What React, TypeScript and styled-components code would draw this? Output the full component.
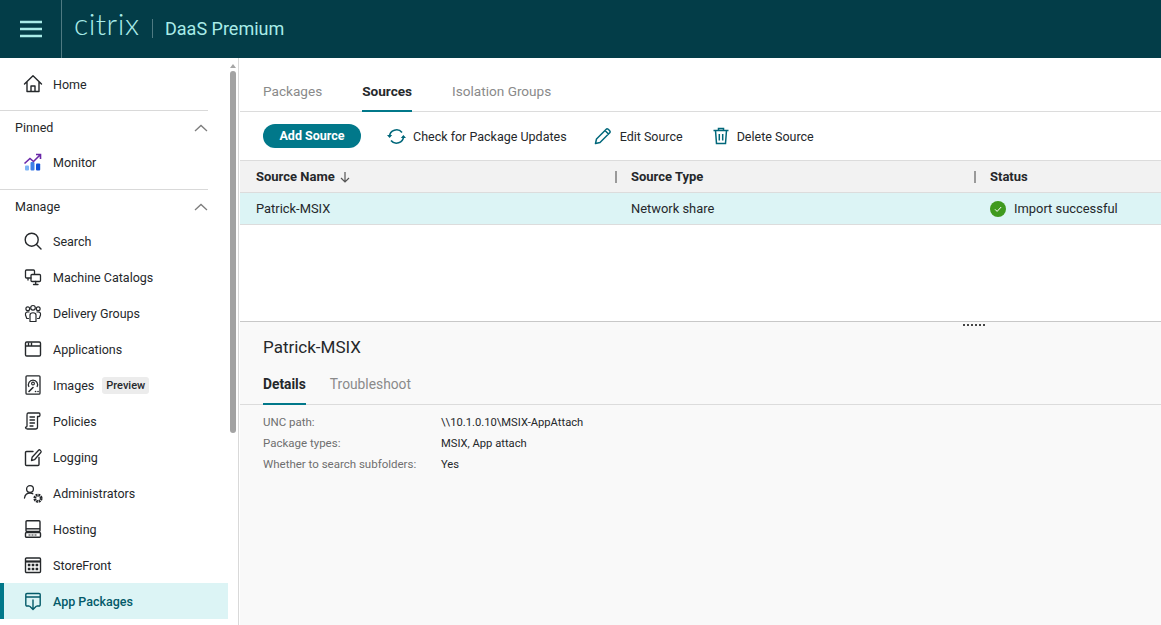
import React from "react";
import styled, { createGlobalStyle } from "styled-components";

const GlobalStyle = createGlobalStyle`
  html, body {
    margin: 0;
    padding: 0;
    height: 100%;
    overflow: hidden;
    background: #fff;
    font-family: Roboto, "Liberation Sans", sans-serif;
    color: #25282b;
  }
`;

const Page = styled.div`
  width: 1161px;
  height: 625px;
  display: flex;
  flex-direction: column;
  overflow: hidden;
`;

const TopBar = styled.header`
  height: 58px;
  flex: none;
  display: flex;
  align-items: center;
  background: #033d48;
  color: #a9ece8;
`;

const MenuButton = styled.div`
  width: 62px;
  height: 58px;
  box-sizing: border-box;
  display: flex;
  align-items: center;
  justify-content: center;
  border-right: 1px solid #4f7a82;
`;

const Logo = styled.span`
  margin: 0 0 13px 12px;
  width: 78px;
  font-family: Lato, sans-serif;
  font-weight: 300;
  font-size: 30px;
  line-height: 44px;
  letter-spacing: 0.5px;
`;

const ProductName = styled.span`
  margin-bottom: 2px;
  padding-left: 12px;
  border-left: 1px solid #4f7a82;
  font-size: 18px;
  line-height: 19px;
`;

const Body = styled.div`
  flex: 1;
  min-height: 0;
  display: flex;
`;

const Sidebar = styled.aside`
  width: 239px;
  box-sizing: border-box;
  flex: none;
  display: flex;
  border-right: 1px solid #d9d9d9;
`;

const NavColumn = styled.nav`
  width: 228px;
  flex: none;
  padding-top: 8px;
`;

const NavSection = styled.div`
  margin-top: 8px;
  &:first-child {
    margin-top: 0;
  }
  &:last-child {
    margin-top: 9px;
  }
`;

const SectionHead = styled.div`
  height: 34px;
  margin-right: 20px;
  box-sizing: border-box;
  padding: 0 0 0 15px;
  display: flex;
  align-items: center;
  justify-content: space-between;
  border-top: 1px solid #d9d9d9;
  font-size: 12.5px;
`;

const NavItem = styled.div<{ $active?: boolean }>`
  height: 36px;
  box-sizing: border-box;
  display: flex;
  align-items: center;
  gap: 10px;
  padding-left: ${(p) => (p.$active ? "19px" : "23px")};
  font-size: 12.5px;
  border-left: ${(p) => (p.$active ? "4px solid #01788a" : "none")};
  background: ${(p) => (p.$active ? "#dcf4f5" : "transparent")};
  color: ${(p) => (p.$active ? "#035a69" : "#25282b")};
  font-weight: ${(p) => (p.$active ? 500 : 400)};
`;

const NavIcon = styled.span`
  width: 20px;
  height: 20px;
  display: flex;
  align-items: center;
  justify-content: center;
  flex: none;
`;

const Badge = styled.span`
  margin-left: -2px;
  padding: 2px 4px;
  background: #ececec;
  border-radius: 3px;
  font-size: 11px;
  font-weight: 500;
  line-height: 13px;
`;

const ScrollTrack = styled.div`
  width: 6px;
  margin-left: 2px;
  padding-top: 6px;
  display: flex;
  flex-direction: column;
  align-items: center;
  gap: 3px;
`;

const ScrollArrow = styled.div`
  width: 0;
  height: 0;
  border-left: 3px solid transparent;
  border-right: 3px solid transparent;
  border-bottom: 4px solid #a6a6a6;
`;

const ScrollThumb = styled.div`
  width: 6px;
  height: 362px;
  border-radius: 3px;
  background: #a3a3a3;
`;

const Main = styled.main`
  flex: 1;
  min-width: 0;
  padding-left: 1px;
  display: flex;
  flex-direction: column;
`;

const TabBar = styled.div<{ $gap: number; $size: number; $height: number }>`
  height: ${(p) => p.$height}px;
  flex: none;
  box-sizing: border-box;
  padding-left: 23px;
  display: flex;
  gap: ${(p) => p.$gap}px;
  border-bottom: 1px solid #dcdcdc;
  font-size: ${(p) => p.$size}px;
`;

const Tab = styled.div<{ $active?: boolean }>`
  display: flex;
  align-items: flex-end;
  padding-bottom: 11px;
  margin-bottom: -1px;
  border-bottom: 2px solid ${(p) => (p.$active ? "#01788a" : "transparent")};
  color: ${(p) => (p.$active ? "#25282b" : "#8a8a8a")};
  font-weight: ${(p) => (p.$active ? 700 : 400)};
`;

const Toolbar = styled.div`
  height: 48px;
  flex: none;
  box-sizing: border-box;
  padding-left: 23px;
  display: flex;
  align-items: center;
  font-size: 12.5px;
`;

const PrimaryButton = styled.button`
  width: 98px;
  height: 24px;
  padding: 0 0 2px;
  border: none;
  border-radius: 12px;
  background: #01788a;
  color: #fff;
  font: 700 12.5px Roboto, sans-serif;
`;

const ToolAction = styled.div<{ $left: number; $gap: number }>`
  display: flex;
  align-items: center;
  gap: ${(p) => p.$gap}px;
  margin-left: ${(p) => p.$left}px;
`;

const TablePane = styled.div`
  height: 161px;
  flex: none;
`;

const HeadRow = styled.div`
  height: 33px;
  box-sizing: border-box;
  display: grid;
  grid-template-columns: 375px 359px 1fr;
  background: #f2f2f2;
  border-top: 1px solid #dcdcdc;
  border-bottom: 1px solid #dcdcdc;
  font-size: 13px;
  font-weight: 700;
`;

const HeadCell = styled.div`
  padding: 0 0 0 16px;
  display: flex;
  align-items: center;
  gap: 4px;
`;

const Divider = styled.span`
  width: 2px;
  height: 12px;
  margin: 0 -2px 0 auto;
  background: #9a9a9a;
`;

const DataRow = styled.div`
  height: 32px;
  box-sizing: border-box;
  display: grid;
  grid-template-columns: 375px 359px 1fr;
  background: #dcf4f5;
  border-bottom: 1px solid #dcdcdc;
  font-size: 12.9px;
`;

const DataCell = styled.div`
  padding-left: 16px;
  display: flex;
  align-items: center;
  gap: 8px;
`;

const DetailPane = styled.section`
  flex: 1;
  position: relative;
  background: #f9f9f9;
  border-top: 1px solid #c8c8c8;
`;

const Handle = styled.div`
  position: absolute;
  left: 723px;
  top: 2px;
  width: 23px;
  height: 2px;
  background: repeating-linear-gradient(90deg, #444 0 2px, transparent 2px 4px);
`;

const DetailTitle = styled.h2`
  margin: 0;
  padding: 14px 0 0 23px;
  height: 24px;
  font-size: 17px;
  line-height: 22px;
  font-weight: 400;
`;

const InfoList = styled.div`
  padding: 10px 0 0 23px;
  display: grid;
  grid-template-columns: 178px 1fr;
  grid-auto-rows: 21px;
  align-items: baseline;
  font-size: 11.2px;
`;

const InfoLabel = styled.span`
  color: #6f6f6f;
  font-size: 11.5px;
`;

const Line = ({ d, w = 1.5 }: { d: string; w?: number }) => (
  <path d={d} fill="none" stroke="currentColor" strokeWidth={w} strokeLinecap="round" strokeLinejoin="round" />
);

const Glyph = ({ size = 20, children }: { size?: number; children: React.ReactNode }) => (
  <svg width={size} height={size} viewBox="0 0 20 20">
    {children}
  </svg>
);

const Chevron = () => (
  <svg width="14" height="8" viewBox="0 0 14 8">
    <path d="M1 7l6-5.5L13 7" fill="none" stroke="#7d7d7d" strokeWidth="1.3" />
  </svg>
);

const icons: Record<string, React.ReactNode> = {
  home: (
    <Glyph size={22}>
      <Line d="M1.5 10L10 1.8 18.5 10M4 8v9.5h12V8M8 17.5v-5.5h4v5.5" w={1.4} />
    </Glyph>
  ),
  monitor: (
    <Glyph>
      <rect x="2" y="13.5" width="4" height="5" rx="1" fill="#7db4f5" />
      <rect x="7.5" y="10" width="4" height="8.5" rx="1" fill="#3f7fe8" />
      <rect x="13" y="11.5" width="4.2" height="7" rx="1" fill="#0f4fd6" />
      <path d="M1.5 11.5L7 6.5l3.5 3L17 3M13 2.5H17.5V7" fill="none" stroke="#6a27a8" strokeWidth="1.6" />
    </Glyph>
  ),
  search: (
    <Glyph>
      <circle cx="8.7" cy="8.7" r="6.5" fill="none" stroke="currentColor" strokeWidth="1.4" />
      <Line d="M13.5 13.5l4.5 4.5" w={1.4} />
    </Glyph>
  ),
  catalogs: (
    <Glyph>
      <Line d="M8 11H3.5a1 1 0 0 1-1-1V4a1 1 0 0 1 1-1h7a1 1 0 0 1 1 1v3M5 11v2" w={1.3} />
      <rect x="8" y="7.5" width="9.5" height="7" rx="1" fill="none" stroke="currentColor" strokeWidth="1.3" />
      <Line d="M10.5 17.5h4.5M12.7 14.5v3" w={1.3} />
    </Glyph>
  ),
  groups: (
    <Glyph>
      <circle cx="10" cy="4.8" r="2.3" fill="none" stroke="currentColor" strokeWidth="1.2" />
      <circle cx="4.8" cy="5.8" r="1.9" fill="none" stroke="currentColor" strokeWidth="1.2" />
      <circle cx="15.2" cy="5.8" r="1.9" fill="none" stroke="currentColor" strokeWidth="1.2" />
      <Line d="M7 18.5v-6.5c0-3 6-3 6 0v6.5zM5.5 15.5H3.8L2.5 12c-.6-3 2-3.5 3.5-3M14.5 15.5h1.7l1.3-3.5c.6-3-2-3.5-3.5-3" w={1.2} />
    </Glyph>
  ),
  applications: (
    <Glyph>
      <rect x="2.5" y="3" width="15" height="14" rx="1.2" fill="none" stroke="currentColor" strokeWidth="1.4" />
      <path d="M2.5 7h15M5.5 3.5v3M8.5 3.5v3" stroke="currentColor" strokeWidth="1.4" />
    </Glyph>
  ),
  images: (
    <Glyph>
      <rect x="3" y=".8" width="14" height="18.4" rx="1" fill="none" stroke="currentColor" strokeWidth="1.3" />
      <path d="M6 12a4.6 4.6 0 1 1 8 0" fill="none" stroke="currentColor" strokeWidth="1.2" />
      <circle cx="10" cy="8.5" r="1.4" fill="none" stroke="currentColor" strokeWidth="1.1" />
      <Line d="M6 16.5l4-4M12.5 16.5h.1M15 16.5h.1" w={1.6} />
    </Glyph>
  ),
  policies: (
    <Glyph>
      <Line d="M5 2h11c1.3 0 1.3 3.5 0 3.5h-1.5V16c0 1-.8 2-2 2H4.5M5 2c-1 0-1 1-1 2v11c0 1.5-1.5 1-1.5 1.5S3 18 4.5 18M7 6h4.500M7 9h4.500M7 12h4.500M7 15h3" w={1.3} />
    </Glyph>
  ),
  logging: (
    <Glyph size={21}>
      <Line d="M10 4H3.5a1 1 0 0 0-1 1v12a1 1 0 0 0 1 1h11.5a1 1 0 0 0 1-1v-7" w={1.4} />
      <Line d="M8.5 13l.6-3.2L15.8 2.5c.8-.8 3 1.200 2.200 2.200l-6.500 7.500z" w={1.3} />
    </Glyph>
  ),
  admins: (
    <Glyph size={21}>
      <circle cx="7" cy="5.5" r="3.4" fill="none" stroke="currentColor" strokeWidth="1.3" />
      <Line d="M1.5 14.5c.5-3 2.500-5 5.500-5 1.200 0 2 .2 2.800.8" w={1.3} />
      <circle cx="15" cy="14.8" r="3.200" fill="none" stroke="currentColor" strokeWidth="2.800" strokeDasharray="1.800 .7" />
      <circle cx="15" cy="14.8" r="1.100" fill="#fff" />
    </Glyph>
  ),
  hosting: (
    <Glyph>
      <rect x="3" y="1.8" width="14" height="10.7" rx="1" fill="none" stroke="currentColor" strokeWidth="1.4" />
      <path d="M3 9.8h14" stroke="currentColor" strokeWidth="1.4" />
      <rect x="2.5" y="13.5" width="15" height="4.8" rx="1" fill="none" stroke="currentColor" strokeWidth="1.4" />
      <path d="M5.5 16h9" stroke="currentColor" strokeWidth="1.2" strokeDasharray="2 1" />
    </Glyph>
  ),
  storefront: (
    <Glyph>
      <rect x="2.5" y="3" width="15" height="14.5" rx="1" fill="none" stroke="currentColor" strokeWidth="1.4" />
      <path d="M2.5 6.5h15" stroke="currentColor" strokeWidth="2.2" />
      <path d="M4.8 10h10.4M4.8 14h10.4" stroke="currentColor" strokeWidth="2.6" strokeDasharray="2.6 1.3" />
    </Glyph>
  ),
  packages: (
    <Glyph>
      <Line d="M6 15H4a1.2 1.2 0 0 1-1.2-1.2V3.7A1.2 1.2 0 0 1 4 2.5h12a1.2 1.2 0 0 1 1.2 1.2v10.1A1.2 1.2 0 0 1 16 15h-2M3 6h14M10 9v9M7 15.5l3 3 3-3" w={1.4} />
    </Glyph>
  ),
};

const navItems = [
  { icon: "search", label: "Search" },
  { icon: "catalogs", label: "Machine Catalogs" },
  { icon: "groups", label: "Delivery Groups" },
  { icon: "applications", label: "Applications" },
  { icon: "images", label: "Images", badge: "Preview" },
  { icon: "policies", label: "Policies" },
  { icon: "logging", label: "Logging" },
  { icon: "admins", label: "Administrators" },
  { icon: "hosting", label: "Hosting" },
  { icon: "storefront", label: "StoreFront" },
  { icon: "packages", label: "App Packages", active: true },
];

const details = [
  ["UNC path:", "\\\\10.1.0.10\\MSIX-AppAttach"],
  ["Package types:", "MSIX, App attach"],
  ["Whether to search subfolders:", "Yes"],
];

const App = () => (
  <Page>
    <GlobalStyle />
    <TopBar>
      <MenuButton>
        <svg width="24" height="18" viewBox="0 0 24 18">
          <path d="M1 2h22M1 9h22M1 16h22" stroke="#a9ece8" strokeWidth="2.4" />
        </svg>
      </MenuButton>
      <Logo>citrix</Logo>
      <ProductName>DaaS Premium</ProductName>
    </TopBar>
    <Body>
      <Sidebar>
        <NavColumn>
          <NavSection>
            <NavItem>
              <NavIcon>{icons.home}</NavIcon>
              Home
            </NavItem>
          </NavSection>
          <NavSection>
            <SectionHead>
              Pinned
              <Chevron />
            </SectionHead>
            <NavItem>
              <NavIcon>{icons.monitor}</NavIcon>
              Monitor
            </NavItem>
          </NavSection>
          <NavSection>
            <SectionHead>
              Manage
              <Chevron />
            </SectionHead>
            {navItems.map((item) => (
              <NavItem key={item.label} $active={item.active}>
                <NavIcon>{icons[item.icon]}</NavIcon>
                {item.label}
                {item.badge && <Badge>{item.badge}</Badge>}
              </NavItem>
            ))}
          </NavSection>
        </NavColumn>
        <ScrollTrack>
          <ScrollArrow />
          <ScrollThumb />
        </ScrollTrack>
      </Sidebar>
      <Main>
        <TabBar $gap={40} $size={13.6} $height={54}>
          <Tab>Packages</Tab>
          <Tab $active>Sources</Tab>
          <Tab>Isolation Groups</Tab>
        </TabBar>
        <Toolbar>
          <PrimaryButton>Add Source</PrimaryButton>
          <ToolAction $left={26} $gap={7}>
            <svg width="19" height="17" viewBox="0 0 19 17">
              <path d="M2.5 8.5A7 7 0 0 1 15 4.5M16.5 8.5A7 7 0 0 1 4 12.5" fill="none" stroke="#01677a" strokeWidth="1.6" />
              <path d="M0 7h5.2L2.6 10zM19 10h-5.2l2.6-3z" fill="#01677a" />
            </svg>
            Check for Package Updates
          </ToolAction>
          <ToolAction $left={27} $gap={8}>
            <svg width="18" height="18" viewBox="0 0 18 18">
              <path d="M1.5 16.5l1-4.5L12.5 2c1-1 4.5 2.5 3.5 3.5L6 15.5zM11 3.5l3.5 3.5" fill="none" stroke="#01677a" strokeWidth="1.5" strokeLinejoin="round" />
            </svg>
            Edit Source
          </ToolAction>
          <ToolAction $left={29} $gap={7}>
            <svg width="18" height="18" viewBox="0 0 18 18">
              <path d="M1.5 3.5h15M6.5 3.5V1.500h5v2M3.500 3.500l1 13h9l1-13M7.300 7v6.500M10.700 7v6.500" fill="none" stroke="#01677a" strokeWidth="1.5" />
            </svg>
            Delete Source
          </ToolAction>
        </Toolbar>
        <TablePane>
          <HeadRow>
            <HeadCell>
              Source Name
              <svg width="12" height="12" viewBox="0 0 12 12">
                <path d="M6 1v10M2 7l4 4 4-4" fill="none" stroke="#555" strokeWidth="1.2" />
              </svg>
              <Divider />
            </HeadCell>
            <HeadCell>
              Source Type
              <Divider />
            </HeadCell>
            <HeadCell>Status</HeadCell>
          </HeadRow>
          <DataRow>
            <DataCell>Patrick-MSIX</DataCell>
            <DataCell>Network share</DataCell>
            <DataCell>
              <svg width="16" height="16" viewBox="0 0 16 16">
                <circle cx="8" cy="8" r="8" fill="#3f9a1e" />
                <path d="M5 8.3l2.1 2.1L11.2 6" fill="none" stroke="#fff" strokeWidth="1" />
              </svg>
              Import successful
            </DataCell>
          </DataRow>
        </TablePane>
        <DetailPane>
          <Handle />
          <DetailTitle>Patrick-MSIX</DetailTitle>
          <TabBar $gap={24} $size={13.8} $height={45}>
            <Tab $active>Details</Tab>
            <Tab>Troubleshoot</Tab>
          </TabBar>
          <InfoList>
            {details.map(([label, value]) => (
              <React.Fragment key={label}>
                <InfoLabel>{label}</InfoLabel>
                <span>{value}</span>
              </React.Fragment>
            ))}
          </InfoList>
        </DetailPane>
      </Main>
    </Body>
  </Page>
);

export default App;
